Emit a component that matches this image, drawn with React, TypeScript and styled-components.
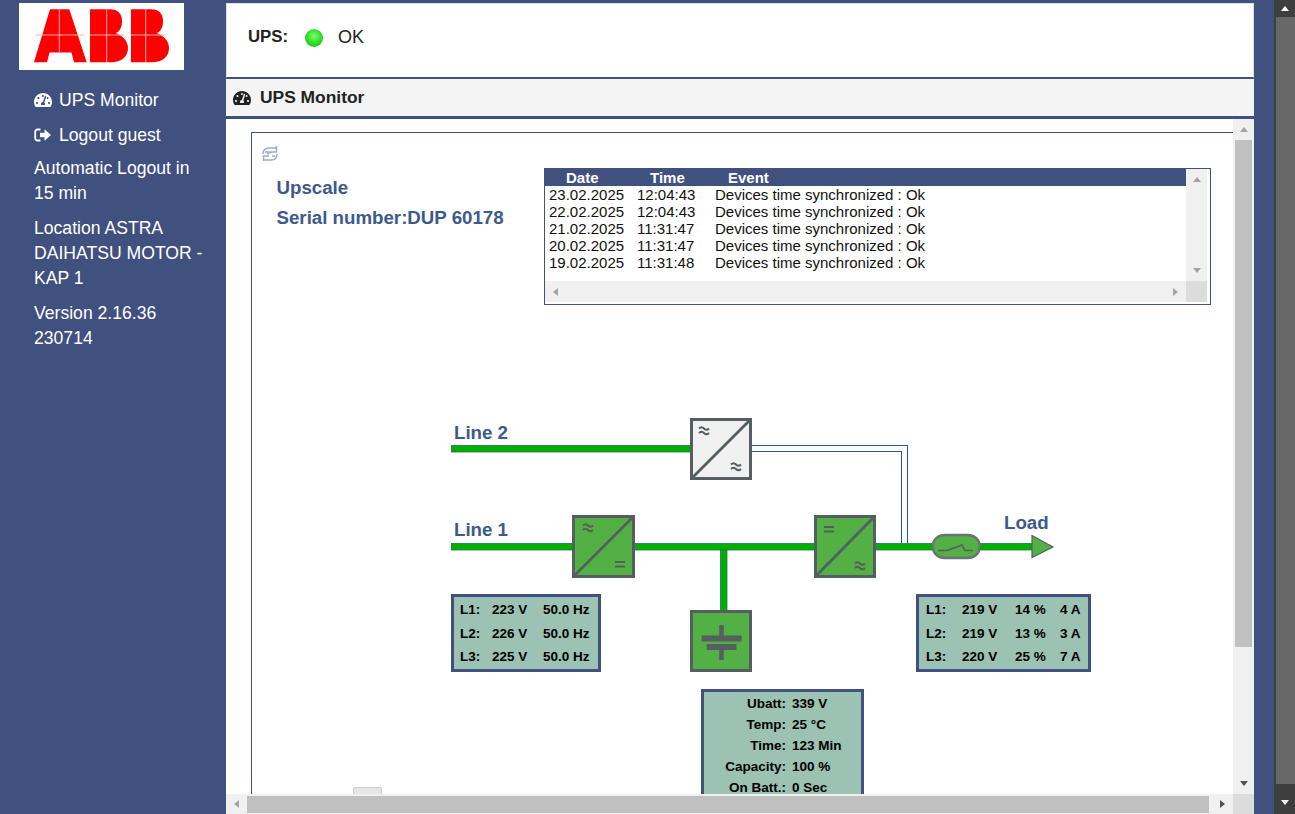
import React from "react";
import styled, { createGlobalStyle, css } from "styled-components";
import { FaTachometerAlt } from "react-icons/fa";

const BLUE = "#40507f";

const GlobalStyle = createGlobalStyle`
    html, body {
        margin: 0;
        height: 100%;
        overflow: hidden;
        background-color: ${BLUE};
        font-family: "Liberation Sans", Arial, sans-serif;
    }
`;

const Page = styled.div`
    display: flex;
    width: 1295px;
    height: 814px;
    overflow: hidden;
`;

/* sidebar */
const Sidebar = styled.nav`
    width: 226px;
    flex: none;
    box-sizing: border-box;
    padding: 3px 20px 0 0;
    color: #fff;
    font-size: 17.6px;
    line-height: 25px;
`;

const LogoBox = styled.div`
    width: 165px;
    height: 67px;
    margin: 0 0 17.5px 19px;
    background-color: #fff;
    svg { display: block; filter: blur(0.35px); }
`;

const SideList = styled.div`
    display: flex;
    flex-direction: column;
    gap: 10px;
    padding-left: 34px;
`;

const SideLink = styled.div`
    display: flex;
    align-items: center;
    gap: 7px;
    svg { width: 18px; height: 18px; flex: none; }
`;

const SideText = styled.div`
    ${SideLink} + & { margin-top: -2px; }
`;

/* main column */
const Main = styled.main`
    width: 1028px;
    flex: none;
    padding-top: 3px;
    box-sizing: border-box;
    display: flex;
    flex-direction: column;
`;

const StatusBar = styled.header`
    height: 75px;
    flex: none;
    box-sizing: border-box;
    border: 1px solid #dfe1e8;
    border-bottom: 1px solid ${BLUE};
    background-color: #fff;
    display: flex;
    align-items: center;
    padding: 0 0 7px 21px;
    color: #222;
`;

const StatusLabel = styled.span`
    font-size: 16.8px;
    font-weight: bold;
`;

const Led = styled.span`
    width: 18px;
    height: 18px;
    margin: 2px 15px 0 17px;
    border-radius: 50%;
    background: radial-gradient(circle at 50% 40%, #7dfb6a 0%, #2ee02a 50%, #12b012 100%);
`;

const StatusValue = styled.span`
    font-size: 18px;
`;

const SectionBar = styled.div`
    height: 40px;
    flex: none;
    box-sizing: border-box;
    margin-top: 1px;
    border-bottom: 3px solid ${BLUE};
    background-color: #f4f4f4;
    display: flex;
    align-items: center;
    gap: 10px;
    padding: 0 0 0 7px;
    color: #222;
    font-size: 17.4px;
    font-weight: bold;
    svg { width: 18px; height: 18px; margin-right: -1px; }
`;

const ContentGrid = styled.div`
    flex: 1;
    min-height: 0;
    display: grid;
    grid-template-columns: 1fr 21px;
    grid-template-rows: 1fr 20px;
    background-color: #fff;
`;

const Viewport = styled.div`
    overflow: hidden;
    padding: 13px 0 0 25px;
`;

const Panel = styled.section`
    box-sizing: border-box;
    height: 900px;
    border-top: 1px solid ${BLUE};
    border-left: 1px solid ${BLUE};
`;

const TopRow = styled.div`
    display: flex;
    height: 172px;
`;

const InfoColumn = styled.div`
    width: 292px;
    flex: none;
    box-sizing: border-box;
    padding: 12px 0 0 10px;
    svg { display: block; margin-bottom: 11px; filter: blur(0.4px); }
`;

const InfoLine = styled.div`
    margin-left: 14.5px;
    color: #3d5a8a;
    font-size: 18.7px;
    font-weight: bold;
    line-height: 30px;
    white-space: nowrap;
`;

/* event log */
const LogBox = styled.div`
    width: 667px;
    height: 137px;
    margin-top: 35px;
    box-sizing: border-box;
    border: 1px solid ${BLUE};
    padding: 0 3px 2px 0;
    display: grid;
    grid-template-columns: 1fr 21px;
    grid-template-rows: 1fr 21px;
`;

const LogList = styled.div`
    overflow: hidden;
    font-size: 15px;
    line-height: 17px;
    color: #111;
`;

const LogRow = styled.div<{ $head?: boolean }>`
    display: grid;
    white-space: nowrap;
    ${(p) => p.$head ? css`
        grid-template-columns: 84px 78px 1fr;
        padding-left: 21px;
        background-color: ${BLUE};
        color: #fff;
        font-weight: bold;
    ` : css`
        grid-template-columns: 88px 78px 1fr;
        padding-left: 4px;
    `}
`;

/* scrollbars */
const ScrollY = styled.div`
    display: flex;
    flex-direction: column;
    background-color: #f0f0f0;
    min-height: 0;
`;

const ScrollX = styled.div`
    display: flex;
    background-color: #f0f0f0;
    min-width: 0;
`;

const ScrollBtnY = styled.div`
    height: 21px;
    flex: none;
    display: flex;
    align-items: center;
    justify-content: center;
`;

const ScrollBtnX = styled.div`
    width: 21px;
    flex: none;
    display: flex;
    align-items: center;
    justify-content: center;
`;

const TrackY = styled.div`
    flex: 1;
    display: flex;
    justify-content: center;
`;

const ThumbY = styled.div`
    width: 17px;
    height: 507px;
    background-color: #c0c0c0;
`;

const TrackX = styled.div`
    flex: 1;
    display: flex;
    align-items: center;
`;

const ThumbX = styled.div`
    width: 962px;
    height: 17px;
    background-color: #c0c0c0;
`;

const Corner = styled.div`
    background-color: #dcdcdc;
`;

const Arrow = styled.span<{ $dir: "up" | "down" | "left" | "right"; $color: string }>`
    width: 0;
    height: 0;
    ${(p) => p.$dir === "up" && css`
        border-left: 4.5px solid transparent;
        border-right: 4.5px solid transparent;
        border-bottom: 5px solid ${p.$color};
    `}
    ${(p) => p.$dir === "down" && css`
        border-left: 4.5px solid transparent;
        border-right: 4.5px solid transparent;
        border-top: 5px solid ${p.$color};
    `}
    ${(p) => p.$dir === "left" && css`
        border-top: 4.5px solid transparent;
        border-bottom: 4.5px solid transparent;
        border-right: 5px solid ${p.$color};
    `}
    ${(p) => p.$dir === "right" && css`
        border-top: 4.5px solid transparent;
        border-bottom: 4.5px solid transparent;
        border-left: 5px solid ${p.$color};
    `}
`;

const Gutter = styled.div`
    width: 20px;
    flex: none;
`;

const PageScroll = styled.div`
    width: 21px;
    flex: none;
    display: flex;
    flex-direction: column;
    background-color: #3e3e3e;
`;

const PageBtnTop = styled.div`
    height: 17px;
    display: flex;
    align-items: center;
    justify-content: center;
`;

const PageThumb = styled.div`
    height: 767px;
    margin-left: 2px;
    background-color: #686868;
`;

const PageBtnBottom = styled.div`
    height: 24px;
    margin-top: 6px;
    display: flex;
    align-items: center;
    justify-content: center;
`;

/* diagram: free canvas, origin at page 252,400 */
const Canvas = styled.div`
    position: relative;
    width: 980px;
    height: 500px;
    margin-top: 95px;
`;

const Wires = styled.svg`
    position: absolute;
    left: 0;
    top: 0;
`;

const LineLabel = styled.span<{ $x: number; $y: number }>`
    position: absolute;
    left: ${(p) => p.$x}px;
    top: ${(p) => p.$y}px;
    color: #3d5a8a;
    font-size: 18.7px;
    font-weight: bold;
    line-height: 20px;
`;

const Readout = styled.div<{ $x: number; $y: number; $w: number; $h: number }>`
    position: absolute;
    left: ${(p) => p.$x}px;
    top: ${(p) => p.$y}px;
    width: ${(p) => p.$w}px;
    height: ${(p) => p.$h}px;
    box-sizing: border-box;
    border: 3px solid ${BLUE};
    background-color: #9bc2b2;
    color: #000;
    font-size: 13.5px;
    font-weight: bold;
    white-space: nowrap;
`;

const ReadoutGrid = styled.div<{ $cols: string; $left: number }>`
    display: grid;
    grid-template-columns: ${(p) => p.$cols};
    grid-auto-rows: 23.5px;
    align-items: center;
    padding: 1px 0 0 ${(p) => p.$left}px;
`;

const BatteryGrid = styled.div`
    display: grid;
    grid-template-columns: 82px auto;
    column-gap: 6px;
    grid-auto-rows: 21px;
    align-items: center;
    padding: 0.6px 0 0;
`;

const BatteryLabel = styled.span`
    text-align: right;
`;

const HiddenTab = styled.div`
    position: absolute;
    left: 101px;
    top: 387px;
    width: 29px;
    height: 15px;
    box-sizing: border-box;
    border: 1px solid #cfcfcf;
    border-radius: 2px 2px 0 0;
    background-color: #e6e6e6;
`;

const AbbLogo = () => (
    <svg width="165" height="67" viewBox="0 0 165 67">
        <g fill="#ff0000">
            <path d="M15 59.3 L31 6.3 H50.3 L67.7 59.3 H55 L52.5 49.5 H30.5 L28 59.3Z" />
            <path d="M71 6.3 H91 C99 6.3 103 11 103 18 C103 24 101 28 97 30 C104 33 109 38 109 45 C109 54 102 59.3 92 59.3 H71Z" />
            <path d="M112 6.3 H132 C140 6.3 144 11 144 18 C144 24 142 28 138 30 C145 33 150 38 150 45 C150 54 143 59.3 133 59.3 H112Z" />
        </g>
        <g stroke="#ffb0b0" strokeWidth="1">
            <path d="M16.5 32 H65 M71 32 H105 M112 32 H146" />
            <path d="M40.3 6.3 V49 M87.7 6.3 V59.3 M126.7 6.3 V59.3" />
        </g>
    </svg>
);

const SignOutIcon = () => (
    <svg viewBox="0 0 18 18">
        <path d="M6.5 3.5 H3.5 A2.2 2.2 0 0 0 1.2 5.7 V12.3 A2.2 2.2 0 0 0 3.5 14.5 H6.5" fill="none" stroke="#fff" strokeWidth="1.8" />
        <path d="M6 6.7 H10.5 V3.2 L17 9 L10.5 14.8 V11.3 H6Z" fill="#fff" />
    </svg>
);

const RefreshIcon = () => (
    <svg width="16" height="17" viewBox="0 0 16 17">
        <g fill="none" stroke="#a3abc6" strokeWidth="1.5">
            <path d="M1 9 C1 5 3 3 7 3 H15 M14.5 1 V7 H9 L5 9" />
            <path d="M15 9 C15 13 13 15 9 15 H1 M1.5 16 V11 H7 M3 7 H8 M10 11 H13" />
        </g>
    </svg>
);

// converter symbols sit in the same drawing as the bus bars
const Tilde = ({ x, y }: { x: number; y: number }) => (
    <path
        d={`M${x} ${y + 1.5} q2.5 -2.5 5 0 t5 0 M${x} ${y + 6} q2.5 -2.5 5 0 t5 0`}
        fill="none"
        stroke="#555e60"
        strokeWidth="2"
    />
);

const Equal = ({ x, y }: { x: number; y: number }) => (
    <path d={`M${x} ${y} h10 M${x} ${y + 4.5} h10`} stroke="#555e60" strokeWidth="2" fill="none" />
);

const Converter = ({ x, y, fill, w = 62, h = 62 }: { x: number; y: number; fill: string; w?: number; h?: number }) => (
    <g>
        <rect x={x + 1.5} y={y + 1.5} width={w - 3} height={h - 3} fill={fill} stroke="#555e60" strokeWidth="3" />
        <path d={`M${x + 2} ${y + h - 2} L${x + w - 2} ${y + 2}`} stroke="#555e60" strokeWidth="2.8" />
    </g>
);

const Bus = ({ x, y, w }: { x: number; y: number; w: number }) => (
    <rect x={x + 0.5} y={y + 0.5} width={w - 1} height="6.5" fill="#00b000" stroke="#2f6f5a" strokeWidth="0.8" />
);

const Diagram = () => (
    <Wires width="980" height="500" viewBox="0 0 980 500">
        <g fill="none" stroke="#2a5a9a" strokeWidth="1" shapeRendering="crispEdges">
            <path d="M500 45.5 H655.5 V143" />
            <path d="M500 51.5 H649.5 V143" />
        </g>
        <Bus x={199} y={45} w={240} />
        <Bus x={199} y={143} w={122} />
        <Bus x={383} y={143} w={180} />
        <Bus x={624} y={143} w={57} />
        <Bus x={728} y={143} w={53} />
        <rect x="468.5" y="150" width="6.5" height="61" fill="#00b000" stroke="#2f6f5a" strokeWidth="0.8" />

        <Converter x={438} y={18} fill="#f0f0f0" />
        <Tilde x={447} y={27} />
        <Tilde x={479} y={63} />

        <Converter x={320} y={115} fill="#52b044" w={63} h={63} />
        <Tilde x={331} y={124} />
        <Equal x={363} y={162} />

        <Converter x={562} y={115} fill="#52b044" w={62} h={63} />
        <Equal x={572} y={127} />
        <Tilde x={603} y={162} />

        <rect x="439.5" y="211.5" width="59" height="59" fill="#52b044" stroke="#555e60" strokeWidth="3" />
        <path d="M449.6 238.5 H489.7 M454.7 247 H484.5" stroke="#555e60" strokeWidth="6" fill="none" />
        <path d="M469.5 225 V236 M469.5 250 V260" stroke="#555e60" strokeWidth="4.5" fill="none" />

        <rect x="681" y="135" width="46.5" height="23" rx="12" ry="10" fill="#52b044" stroke="#6b7274" strokeWidth="2.4" />
        <path d="M686 150.5 H695 L710 145 L713 150.5 H721" fill="none" stroke="#555e60" strokeWidth="1.5" />

        <path d="M780 135.5 L801 147 L780 157.5Z" fill="#52b044" stroke="#555e60" strokeWidth="1.2" />
    </Wires>
);

const inputRows = [
    ["L1:", "223 V", "50.0 Hz"],
    ["L2:", "226 V", "50.0 Hz"],
    ["L3:", "225 V", "50.0 Hz"],
];

const outputRows = [
    ["L1:", "219 V", "14 %", "4 A"],
    ["L2:", "219 V", "13 %", "3 A"],
    ["L3:", "220 V", "25 %", "7 A"],
];

const batteryRows = [
    ["Ubatt:", "339 V"],
    ["Temp:", "25 °C"],
    ["Time:", "123 Min"],
    ["Capacity:", "100 %"],
    ["On Batt.:", "0 Sec"],
];

const logRows = [
    ["23.02.2025", "12:04:43"],
    ["22.02.2025", "12:04:43"],
    ["21.02.2025", "11:31:47"],
    ["20.02.2025", "11:31:47"],
    ["19.02.2025", "11:31:48"],
];

const GRAY = "#a3a3a3";
const DARK = "#505050";

const App: React.FC = () => {
    return (
        <Page>
            <GlobalStyle />
            <Sidebar>
                <LogoBox><AbbLogo /></LogoBox>
                <SideList>
                    <SideLink><FaTachometerAlt />UPS Monitor</SideLink>
                    <SideLink><SignOutIcon />Logout guest</SideLink>
                    <SideText>Automatic Logout in 15 min</SideText>
                    <SideText>Location ASTRA DAIHATSU MOTOR - KAP 1</SideText>
                    <SideText>Version 2.16.36 230714</SideText>
                </SideList>
            </Sidebar>
            <Main>
                <StatusBar>
                    <StatusLabel>UPS:</StatusLabel>
                    <Led />
                    <StatusValue>OK</StatusValue>
                </StatusBar>
                <SectionBar><FaTachometerAlt />UPS Monitor</SectionBar>
                <ContentGrid>
                    <Viewport>
                        <Panel>
                            <TopRow>
                                <InfoColumn>
                                    <RefreshIcon />
                                    <InfoLine>Upscale</InfoLine>
                                    <InfoLine>Serial number:DUP 60178</InfoLine>
                                </InfoColumn>
                                <LogBox>
                                    <LogList>
                                        <LogRow $head>
                                            <span>Date</span>
                                            <span>Time</span>
                                            <span>Event</span>
                                        </LogRow>
                                        {logRows.map(([date, time]) => (
                                            <LogRow key={date}>
                                                <span>{date}</span>
                                                <span>{time}</span>
                                                <span>Devices time synchronized : Ok</span>
                                            </LogRow>
                                        ))}
                                    </LogList>
                                    <ScrollY>
                                        <ScrollBtnY><Arrow $dir="up" $color={GRAY} /></ScrollBtnY>
                                        <TrackY />
                                        <ScrollBtnY><Arrow $dir="down" $color={GRAY} /></ScrollBtnY>
                                    </ScrollY>
                                    <ScrollX>
                                        <ScrollBtnX><Arrow $dir="left" $color={GRAY} /></ScrollBtnX>
                                        <TrackX />
                                        <ScrollBtnX><Arrow $dir="right" $color={GRAY} /></ScrollBtnX>
                                    </ScrollX>
                                    <Corner />
                                </LogBox>
                            </TopRow>
                            <Canvas>
                                <Diagram />
                                <LineLabel $x={202} $y={23}>Line 2</LineLabel>
                                <LineLabel $x={202} $y={120}>Line 1</LineLabel>
                                <LineLabel $x={752} $y={113}>Load</LineLabel>
                                <Readout $x={199} $y={194} $w={150} $h={78}>
                                    <ReadoutGrid $cols="32px 51px auto" $left={6}>
                                        {inputRows.flat().map((cell, i) => <span key={i}>{cell}</span>)}
                                    </ReadoutGrid>
                                </Readout>
                                <Readout $x={664} $y={194} $w={175} $h={78}>
                                    <ReadoutGrid $cols="36px 53px 45px auto" $left={7}>
                                        {outputRows.flat().map((cell, i) => <span key={i}>{cell}</span>)}
                                    </ReadoutGrid>
                                </Readout>
                                <Readout $x={449} $y={289} $w={163} $h={130}>
                                    <BatteryGrid>
                                        {batteryRows.map(([label, value]) => (
                                            <React.Fragment key={label}>
                                                <BatteryLabel>{label}</BatteryLabel>
                                                <span>{value}</span>
                                            </React.Fragment>
                                        ))}
                                    </BatteryGrid>
                                </Readout>
                                <HiddenTab />
                            </Canvas>
                        </Panel>
                    </Viewport>
                    <ScrollY>
                        <ScrollBtnY><Arrow $dir="up" $color={GRAY} /></ScrollBtnY>
                        <TrackY><ThumbY /></TrackY>
                        <ScrollBtnY><Arrow $dir="down" $color={DARK} /></ScrollBtnY>
                    </ScrollY>
                    <ScrollX>
                        <ScrollBtnX><Arrow $dir="left" $color={GRAY} /></ScrollBtnX>
                        <TrackX><ThumbX /></TrackX>
                        <ScrollBtnX><Arrow $dir="right" $color={DARK} /></ScrollBtnX>
                    </ScrollX>
                    <Corner />
                </ContentGrid>
            </Main>
            <Gutter />
            <PageScroll>
                <PageBtnTop><Arrow $dir="up" $color="#fff" /></PageBtnTop>
                <PageThumb />
                <PageBtnBottom><Arrow $dir="down" $color="#fff" /></PageBtnBottom>
            </PageScroll>
        </Page>
    );
};

export default App;
